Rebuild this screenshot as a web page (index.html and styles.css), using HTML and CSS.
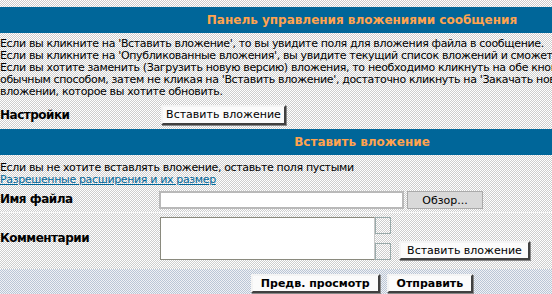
FILE: index.html
```html
<!DOCTYPE html>
<html lang="ru">
<head>
<meta charset="utf-8">
<title>Панель управления вложениями сообщения</title>
<link rel="stylesheet" href="styles.css">
</head>
<body>
<div class="page">
  <div class="topgap"></div>
  <div class="cat">Панель управления вложениями сообщения</div>
  <div class="intro">
    <div class="line">Если вы кликните на 'Вставить вложение', то вы увидите поля для вложения файла в сообщение.</div>
    <div class="line">Если вы кликните на 'Опубликованные вложения', вы увидите текущий список вложений и сможете их редактировать.</div>
    <div class="line">Если вы хотите заменить (Загрузить новую версию) вложения, то необходимо кликнуть на обе кнопки, добавить вложение как</div>
    <div class="line">обычным способом, затем не кликая на 'Вставить вложение', достаточно кликнуть на 'Закачать новую версию' во</div>
    <div class="line">вложении, которое вы хотите обновить.</div>
  </div>
  <div class="row row-settings">
    <div class="label">Настройки</div>
    <div class="field"><button class="btn">Вставить вложение</button></div>
  </div>
  <div class="cat cat2">Вставить вложение</div>
  <div class="hint">
    <div class="line">Если вы не хотите вставлять вложение, оставьте поля пустыми</div>
    <div class="line"><a href="#" class="link">Разрешенные расширения и их размер</a></div>
  </div>
  <div class="row row-file">
    <div class="label">Имя файла</div>
    <div class="field"><input class="file-input" type="text"><button class="btn-browse">Обзор...</button></div>
  </div>
  <div class="row row-comment">
    <div class="label">Комментарии</div>
    <div class="field comment-field">
      <textarea class="comment"></textarea>
      <div class="scroll"><span class="sbox"></span><span class="sbox"></span></div>
      <button class="btn btn-add">Вставить вложение</button>
    </div>
  </div>
  <div class="actions">
    <button class="btn btn-main">Предв. просмотр</button>
    <button class="btn btn-main">Отправить</button>
  </div>
</div>
</body>
</html>
```
FILE: styles.css
```css
html, body {
  margin: 0;
  padding: 0;
  overflow: hidden;
}
body {
  font-family: "DejaVu Sans", Verdana, sans-serif;
  font-size: 11px;
  color: #000;
  background: repeating-conic-gradient(#cdcdcd 0 25%, #ffffff 0 50%) 0 0 / 2px 2px;
}
.page {
  width: 724px;
}
.topgap {
  height: 7px;
}
.cat {
  height: 26px;
  line-height: 26px;
  background: #006699;
  color: #ffa34f;
  font-weight: bold;
  font-size: 12px;
  text-align: center;
}
.cat2 {
  margin-top: 1px;
}
.intro {
  padding-top: 5px;
  height: 61px;
}
.line {
  line-height: 12px;
  height: 12px;
  white-space: nowrap;
  letter-spacing: -0.35px;
}
.row {
  display: flex;
  align-items: center;
}
.label {
  width: 160px;
  flex: none;
  font-weight: bold;
  font-size: 12px;
  letter-spacing: -0.5px;
}
.field {
  display: flex;
  align-items: center;
}
.row-settings {
  height: 29px;
  padding-top: 2px;
  box-sizing: border-box;
}
.btn {
  font-family: "DejaVu Sans", Verdana, sans-serif;
  font-size: 11px;
  white-space: nowrap;
  background: #fbfbfb;
  color: #000;
  border: 2px solid;
  border-color: #f4f4f4 #404040 #404040 #f4f4f4;
  box-shadow: 1px 1px 0 #888;
  padding: 0 10px;
  height: 20px;
  margin: 0;
  cursor: pointer;
}
.row-settings .btn {
  margin-left: 1px;
  width: 125px;
  padding: 0;
}
.hint {
  padding-top: 7px;
  height: 29px;
}
.link {
  color: #006699;
  text-decoration: underline;
}
.row-file {
  height: 21px;
  align-items: flex-start;
}
.row-file .label {
  padding-top: 1px;
}
.file-input {
  width: 245px;
  height: 18px;
  box-sizing: border-box;
  margin: 0 0 0 -1px;
  border: 2px solid #b9b9b9;
  background: #fff;
  padding: 0;
}
.btn-browse {
  font-family: "DejaVu Sans", Verdana, sans-serif;
  font-size: 11px;
  width: 76px;
  height: 18px;
  margin-left: 3px;
  padding: 0;
  background: #d9d9d9;
  border: 1px solid #aaa;
  color: #000;
}
.row-comment {
  border-top: 1px solid #f6f6f6;
  padding-top: 4px;
  height: 47px;
  align-items: flex-start;
}
.row-comment .label {
  padding-top: 14px;
}
.comment-field {
  align-items: flex-end;
}
.comment {
  width: 215px;
  height: 43px;
  box-sizing: border-box;
  margin: 0;
  border: 1px solid #8a8a7e;
  border-right-color: #c8c8c8;
  background: #fff;
  resize: none;
  padding: 0;
  overflow: hidden;
}
.scroll {
  width: 16px;
  height: 43px;
  display: flex;
  flex-direction: column;
  justify-content: space-between;
}
.sbox {
  display: block;
  height: 17px;
  border: 1px solid #9aa;
  box-sizing: border-box;
}
.btn-add {
  margin-left: 8px;
  width: 131px;
  height: 19px;
  padding: 0;
}
.actions {
  margin-top: 5px;
  height: 30px;
  display: flex;
  justify-content: center;
  gap: 7px;
  padding-top: 5px;
  box-sizing: border-box;
  background: repeating-conic-gradient(#b9c6d6 0 25%, #f1f1f4 0 50%) 0 0 / 2px 2px;
}
.btn-main {
  font-weight: bold;
  height: 19px;
  padding: 0 8px;
}
```
